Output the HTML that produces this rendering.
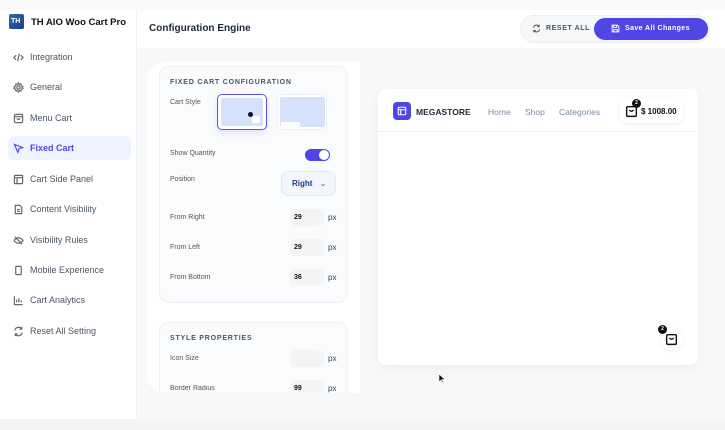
<!DOCTYPE html>
<html><head><meta charset="utf-8"><style>
*{box-sizing:border-box;margin:0;padding:0}
body{width:725px;height:430px;overflow:hidden;background:#f3f4f6;font-family:"Liberation Sans",sans-serif;position:relative}
.abs{position:absolute}
#top{left:0;top:0;width:725px;height:10px;background:#f9fafb}
#side{left:0;top:10px;width:137px;height:409px;background:#fff;border-right:1px solid #eef0f3}
#head{left:137px;top:10px;width:588px;height:38px;background:#fff}
#main{left:137px;top:48px;width:588px;height:371px;background:#f7f8fa}
.nav{position:absolute;left:8px;width:123px;height:24px;display:flex;align-items:center;padding-left:5px;font-size:9px;color:#4b5563}
.nav svg{width:11px;height:11px;margin-right:6px;stroke:#666;fill:none;stroke-width:1.3}
.nav.act{background:#eef3ff;border-radius:6px;color:#4f46e5;font-weight:bold}
.nav.act svg{stroke:#4f46e5}
.lbl{position:absolute;left:170px;font-size:7px;color:#555}
.inp{position:absolute;left:290px;width:34px;height:17px;background:#f3f4f6;border-radius:5px;font-size:7px;font-weight:bold;color:#111;padding:5px 0 0 4px}
.px{position:absolute;left:328px;font-size:8px;color:#374151}
.sec{position:absolute;left:170px;font-size:7px;font-weight:bold;letter-spacing:.8px;color:#4b5563}
</style></head><body>
<div id="top" class="abs"></div>
<div id="side" class="abs"></div>
<div id="head" class="abs"></div>
<div id="main" class="abs"></div>

<div class="abs" style="left:9px;top:14px;width:15px;height:15px;background:linear-gradient(135deg,#2b6cb0,#1e3a8a);border-radius:2px;color:#fff;font-size:7px;font-weight:bold;padding:4px 0 0 2px">TH</div>
<div class="abs" style="left:31px;top:17px;font-size:9.5px;font-weight:bold;color:#111">TH AIO Woo Cart Pro</div>

<div class="nav" style="top:45px"><svg viewBox="0 0 12 12"><path d="M3.5 3.5 1 6l2.5 2.5M8.5 3.5 11 6 8.5 8.5M7 2 5 10"/></svg>Integration</div>
<div class="nav" style="top:75px"><svg viewBox="0 0 12 12"><circle cx="6" cy="6" r="1.8"/><path d="M6 1l1 1.5 1.8-.3.3 1.8L10.8 5 10 6l.8 1-1.7 1 -.3 1.8-1.8-.3L6 11 5 9.5l-1.8.3-.3-1.8L1.2 7 2 6l-.8-1 1.7-1 .3-1.8 1.8.3z"/></svg>General</div>
<div class="nav" style="top:106px"><svg viewBox="0 0 12 12"><rect x="1.5" y="1.5" width="9" height="9" rx="1.5"/><path d="M1.5 4h9M4 6q2 2 4 0"/></svg>Menu Cart</div>
<div class="nav act" style="top:136px"><svg viewBox="0 0 12 12"><path d="M1.5 1.5l9 3.5-4 1.2-1.2 4z"/></svg>Fixed Cart</div>
<div class="nav" style="top:167px"><svg viewBox="0 0 12 12"><rect x="1.5" y="1.5" width="9" height="9" rx="1"/><path d="M1.5 4h9M4.5 4v6.5"/></svg>Cart Side Panel</div>
<div class="nav" style="top:197px"><svg viewBox="0 0 12 12"><path d="M2.5 1.5h5l2 2v7h-7zM4.5 6h3M4.5 8h3"/></svg>Content Visibility</div>
<div class="nav" style="top:228px"><svg viewBox="0 0 12 12"><path d="M1 6q5-6 10 0-5 6-10 0M2 2l8 8"/></svg>Visibility Rules</div>
<div class="nav" style="top:258px"><svg viewBox="0 0 12 12"><rect x="3" y="1.5" width="6" height="9" rx="1"/></svg>Mobile Experience</div>
<div class="nav" style="top:288px"><svg viewBox="0 0 12 12"><path d="M1.5 1.5v9h9M4 8V5M6.5 8V3.5M9 8V6"/></svg>Cart Analytics</div>
<div class="nav" style="top:319px"><svg viewBox="0 0 12 12"><path d="M2 5a4 4 0 0 1 7.5-1.5M10 7a4 4 0 0 1-7.5 1.5M9.5 1v2.5H7M2.5 11V8.5H5"/></svg>Reset All Setting</div>

<div class="abs" style="left:149px;top:23px;font-size:10px;font-weight:bold;color:#1f2937">Configuration Engine</div>

<div class="abs" style="left:520px;top:15px;width:190px;height:28px;background:#f6f7f9;border:1px solid #eceef2;border-radius:14px"></div>
<svg class="abs" style="left:532px;top:24px" width="9" height="9" viewBox="0 0 12 12" fill="none" stroke="#555" stroke-width="1.4"><path d="M2 5a4 4 0 0 1 7.5-1.5M10 7a4 4 0 0 1-7.5 1.5M9.5 1v2.5H7M2.5 11V8.5H5"/></svg>
<div class="abs" style="left:546px;top:25px;font-size:7px;font-weight:bold;letter-spacing:.6px;color:#4b5563">RESET ALL</div>
<div class="abs" style="left:594px;top:18px;width:114px;height:22px;background:#4f46e5;border-radius:11px"></div>
<svg class="abs" style="left:611px;top:24px" width="9" height="9" viewBox="0 0 12 12" fill="none" stroke="#fff" stroke-width="1.3"><path d="M1.5 1.5h7l2 2v7h-9zM3.5 1.5v3h4v-3M3.5 10.5v-3h5v3"/></svg>
<div class="abs" style="left:625px;top:25px;font-size:7px;font-weight:bold;color:#fff;letter-spacing:.4px">Save All Changes</div>

<div class="abs" style="left:147px;top:62px;width:213px;height:331px;background:#fff;border-radius:18px 0 0 18px;overflow:hidden">
 <div class="abs" style="left:12px;top:4px;width:189px;height:237px;background:#fafbfc;border:1px solid #eef0f3;border-radius:10px"></div>
 <div class="abs" style="left:12px;top:260px;width:189px;height:100px;background:#fafbfc;border:1px solid #eef0f3;border-radius:10px"></div>
</div>
<div class="sec" style="top:79px">FIXED CART CONFIGURATION</div>
<div class="lbl" style="top:99px">Cart Style</div>
<div class="abs" style="left:217px;top:94px;width:50px;height:36px;border:1.5px solid #5b55e8;border-radius:5px;background:#fff;box-shadow:0 3px 6px rgba(79,70,229,.15)"></div>
<div class="abs" style="left:221px;top:98px;width:42px;height:28px;background:#d6e2fc;border-radius:2px"></div>
<div class="abs" style="left:248px;top:112px;width:5px;height:5px;background:#111;border-radius:50%"></div>
<div class="abs" style="left:252px;top:116px;width:8px;height:7px;background:#fff;border-radius:2px"></div>
<div class="abs" style="left:277px;top:94px;width:50px;height:36px;border:1px solid #eef0f3;border-radius:5px;background:#fff"></div>
<div class="abs" style="left:280px;top:97px;width:45px;height:30px;background:#d6e2fc;border-radius:2px"></div>
<div class="abs" style="left:281px;top:122px;width:19px;height:5px;background:#fff"></div>
<div class="lbl" style="top:150px">Show Quantity</div>
<div class="abs" style="left:305px;top:149px;width:25px;height:12px;background:#4f46e5;border-radius:6px"></div>
<div class="abs" style="left:319px;top:150px;width:10px;height:10px;background:#fff;border-radius:50%"></div>
<div class="lbl" style="top:176px">Position</div>
<div class="abs" style="left:281px;top:171px;width:55px;height:25px;background:#f3f6fd;border:1px solid #e2e8f5;border-radius:8px;font-size:8px;font-weight:bold;color:#1e3a8a;padding:7px 0 0 10px">Right <span style="color:#4f46e5;margin-left:5px;font-weight:normal">&#8964;</span></div>
<div class="lbl" style="top:214px">From Right</div><div class="inp" style="top:209px">29</div><div class="px" style="top:213px">px</div>
<div class="lbl" style="top:244px">From Left</div><div class="inp" style="top:239px">29</div><div class="px" style="top:243px">px</div>
<div class="lbl" style="top:274px">From Bottom</div><div class="inp" style="top:269px">36</div><div class="px" style="top:273px">px</div>
<div class="sec" style="top:335px">STYLE PROPERTIES</div>
<div class="lbl" style="top:355px">Icon Size</div><div class="inp" style="top:350px"></div><div class="px" style="top:354px">px</div>
<div class="lbl" style="top:385px;height:8px;overflow:hidden">Border Radius</div><div class="inp" style="top:380px;height:13px">99</div><div class="px" style="top:384px;height:9px;overflow:hidden">px</div>

<div class="abs" style="left:378px;top:89px;width:320px;height:276px;background:#fff;border-radius:8px;box-shadow:0 4px 14px rgba(0,0,0,.04)"></div>
<div class="abs" style="left:378px;top:131px;width:320px;height:1px;background:#f0f1f4"></div>
<div class="abs" style="left:393px;top:102px;width:18px;height:18px;background:#4f46e5;border-radius:4px"></div>
<svg class="abs" style="left:397px;top:106px" width="10" height="10" viewBox="0 0 12 12" fill="none" stroke="#fff" stroke-width="1.3"><rect x="1.5" y="1.5" width="9" height="9" rx="1"/><path d="M1.5 4.5h9M4.5 4.5v6"/></svg>
<div class="abs" style="left:416px;top:107px;font-size:8.5px;font-weight:bold;color:#1f2937">MEGASTORE</div>
<div class="abs" style="left:488px;top:107px;font-size:8.5px;color:#7b8aa3">Home</div>
<div class="abs" style="left:525px;top:107px;font-size:8.5px;color:#7b8aa3">Shop</div>
<div class="abs" style="left:559px;top:107px;font-size:8.5px;color:#7b8aa3">Categories</div>
<div class="abs" style="left:620px;top:99px;width:63px;height:24px;background:#fff;border-radius:7px;box-shadow:0 1px 4px rgba(0,0,0,.08)"></div>
<svg class="abs" style="left:625px;top:104px" width="13" height="14" viewBox="0 0 12 13" fill="none" stroke="#111" stroke-width="1.3"><rect x="1.5" y="2.5" width="9" height="9" rx="1"/><path d="M4 5.5q2 2.5 4 0"/></svg>
<div class="abs" style="left:632px;top:99px;width:9px;height:9px;background:#111;border-radius:50%;color:#fff;font-size:5px;text-align:center;line-height:9px;font-weight:bold">2</div>
<div class="abs" style="left:641px;top:107px;font-size:8px;font-weight:bold;color:#111">$ 1008.00</div>

<div class="abs" style="left:661px;top:328px;width:22px;height:22px;background:#fff;border-radius:50%;box-shadow:0 1px 5px rgba(0,0,0,.07)"></div>
<svg class="abs" style="left:665px;top:332px" width="13" height="14" viewBox="0 0 12 13" fill="none" stroke="#111" stroke-width="1.3"><rect x="1.5" y="2.5" width="9" height="9" rx="1"/><path d="M4 5.5q2 2.5 4 0"/></svg>
<div class="abs" style="left:658px;top:325px;width:9px;height:9px;background:#111;border-radius:50%;color:#fff;font-size:5px;text-align:center;line-height:9px;font-weight:bold">2</div>

<svg class="abs" style="left:438px;top:373px" width="8" height="11" viewBox="0 0 8 11"><path d="M1 1v8l2-2 1.5 3 1-.5L4 6.5h3z" fill="#111" stroke="#fff" stroke-width=".6"/></svg>
</body></html>
